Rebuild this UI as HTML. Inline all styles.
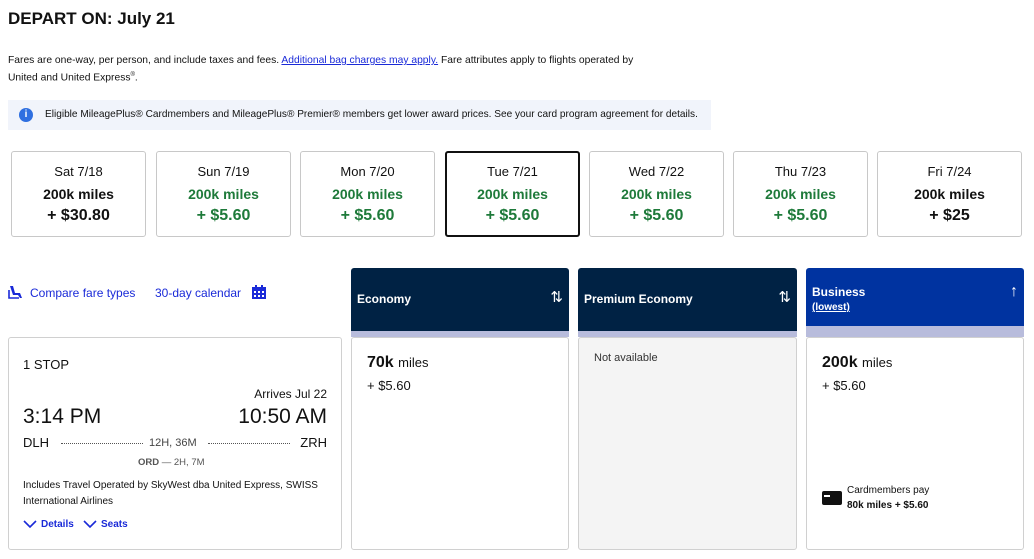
<!DOCTYPE html>
<html><head><style>
*{box-sizing:border-box;margin:0;padding:0}
body{width:1034px;height:559px;background:#fff;font-family:"Liberation Sans",sans-serif;color:#111;position:relative;overflow:hidden}
.a{position:absolute}
.card{position:absolute;top:151px;width:135px;height:86px;border:1px solid #c8c8c8;border-radius:3px;text-align:center}
.card .d{font-size:13px;margin-top:12px}
.card .m{font-size:14px;margin-top:7px;font-weight:bold}
.card .p{font-size:16px;margin-top:5px;font-weight:bold}
.g{color:#1e7a3a}
.hd{position:absolute;top:268px;height:69px;background:#002244;color:#fff;border-radius:3px 3px 0 0;font-size:12px;font-weight:bold;overflow:hidden}
.hd .band{position:absolute;left:0;right:0;bottom:0;height:6px;background:#b8bcdc}
.bx{position:absolute;top:337px;height:213px;border:1px solid #d0d0d0;border-radius:3px}
.blue{color:#1a2ad8}
</style></head><body>
<div class="a" style="left:8px;top:9px;font-size:17px;font-weight:bold">DEPART ON: July 21</div>
<div class="a" style="left:8px;top:53px;font-size:10.3px;line-height:15px;width:660px">Fares are one-way, per person, and include taxes and fees. <span class="blue" style="text-decoration:underline">Additional bag charges may apply.</span> Fare attributes apply to flights operated by<br>United and United Express<sup style="font-size:6px">®</sup>.</div>
<div class="a" style="left:8px;top:100px;width:703px;height:30px;background:#f1f4fb"></div>
<div class="a" style="left:19px;top:108px;width:14px;height:14px;border-radius:50%;background:#2f6fe0;color:#fff;font-size:10px;text-align:center;line-height:14px;font-weight:bold">i</div>
<div class="a" style="left:45px;top:109px;font-size:10.1px">Eligible MileagePlus® Cardmembers and MileagePlus® Premier® members get lower award prices. See your card program agreement for details.</div>

<div class="card" style="left:11px"><div class="d">Sat 7/18</div><div class="m">200k miles</div><div class="p">+ $30.80</div></div>
<div class="card" style="left:156px"><div class="d">Sun 7/19</div><div class="m g">200k miles</div><div class="p g">+ $5.60</div></div>
<div class="card" style="left:300px"><div class="d">Mon 7/20</div><div class="m g">200k miles</div><div class="p g">+ $5.60</div></div>
<div class="card" style="left:445px;border:2px solid #111"><div class="d" style="margin-top:11px">Tue 7/21</div><div class="m g">200k miles</div><div class="p g">+ $5.60</div></div>
<div class="card" style="left:589px"><div class="d">Wed 7/22</div><div class="m g">200k miles</div><div class="p g">+ $5.60</div></div>
<div class="card" style="left:733px"><div class="d">Thu 7/23</div><div class="m g">200k miles</div><div class="p g">+ $5.60</div></div>
<div class="card" style="left:877px;width:145px"><div class="d">Fri 7/24</div><div class="m">200k miles</div><div class="p">+ $25</div></div>

<svg class="a" style="left:8px;top:285px" width="16" height="15" viewBox="0 0 16 15"><path d="M2 1h3l2 7h5l2 5h-2l-2-3H5z" fill="#1a2ad8"/><path d="M1 5v8h10" stroke="#1a2ad8" stroke-width="1.6" fill="none"/></svg>
<div class="a blue" style="left:30px;top:286px;font-size:12px">Compare fare types</div>
<div class="a blue" style="left:155px;top:286px;font-size:12px">30-day calendar</div>
<svg class="a" style="left:252px;top:285px" width="14" height="14" viewBox="0 0 14 14"><rect x="0" y="2" width="14" height="12" fill="#1a2ad8"/><rect x="3" y="0" width="2" height="3" fill="#1a2ad8"/><rect x="9" y="0" width="2" height="3" fill="#1a2ad8"/><g fill="#fff"><rect x="2" y="6" width="2" height="2"/><rect x="6" y="6" width="2" height="2"/><rect x="10" y="6" width="2" height="2"/><rect x="2" y="10" width="2" height="2"/><rect x="6" y="10" width="2" height="2"/><rect x="10" y="10" width="2" height="2"/></g></svg>

<div class="hd" style="left:351px;width:218px"><div class="a" style="left:6px;top:24px">Economy</div><div class="a" style="right:6px;top:20px;font-size:15px;font-weight:normal">⇅</div><div class="band"></div></div>
<div class="hd" style="left:578px;width:219px"><div class="a" style="left:6px;top:24px">Premium Economy</div><div class="a" style="right:6px;top:20px;font-size:15px;font-weight:normal">⇅</div><div class="band"></div></div>
<div class="hd" style="left:806px;width:218px;background:#0033a0"><div class="a" style="left:6px;top:17px">Business</div><div class="a" style="left:6px;top:34px;font-size:10px;text-decoration:underline">(lowest)</div><div class="a" style="right:6px;top:15px;font-size:16px;font-weight:normal">↑</div><div class="band" style="height:11px"></div></div>

<div class="bx" style="left:8px;width:334px">
<div class="a" style="left:14px;top:19px;font-size:13px">1 STOP</div>
<div class="a" style="right:14px;top:49px;font-size:12px">Arrives Jul 22</div>
<div class="a" style="left:14px;top:67px;font-size:21px">3:14 PM</div>
<div class="a" style="right:14px;top:67px;font-size:21px">10:50 AM</div>
<div class="a" style="left:14px;top:97px;font-size:13px">DLH</div>
<div class="a" style="right:14px;top:97px;font-size:13px">ZRH</div>
<div class="a" style="left:52px;top:105px;width:82px;border-top:1px dotted #555"></div>
<div class="a" style="left:140px;top:99px;font-size:11px;color:#444">12H, 36M</div>
<div class="a" style="left:199px;top:105px;width:82px;border-top:1px dotted #555"></div>
<div class="a" style="left:129px;top:119px;font-size:9.5px;color:#555"><b>ORD</b> — 2H, 7M</div>
<div class="a" style="left:14px;top:140px;font-size:10px;line-height:16px;width:310px">Includes Travel Operated by SkyWest dba United Express, SWISS International Airlines</div>
<svg class="a" style="left:14px;top:182px" width="14" height="9" viewBox="0 0 14 9"><path d="M1 1l6 6 6-6" stroke="#1a2ad8" stroke-width="1.6" fill="none"/></svg>
<div class="a blue" style="left:32px;top:181px;font-size:10px;font-weight:bold">Details</div>
<svg class="a" style="left:74px;top:182px" width="14" height="9" viewBox="0 0 14 9"><path d="M1 1l6 6 6-6" stroke="#1a2ad8" stroke-width="1.6" fill="none"/></svg>
<div class="a blue" style="left:92px;top:181px;font-size:10px;font-weight:bold">Seats</div>
</div>
<div class="bx" style="left:351px;width:218px">
<div class="a" style="left:15px;top:16px;font-size:16px;font-weight:bold">70k <span style="font-size:13px;font-weight:normal">miles</span></div>
<div class="a" style="left:15px;top:40px;font-size:13px">+ $5.60</div></div>
<div class="bx" style="left:578px;width:219px;background:#f4f4f4"><div class="a" style="left:15px;top:14px;font-size:11px;color:#333">Not available</div></div>
<div class="bx" style="left:806px;width:218px">
<div class="a" style="left:15px;top:16px;font-size:16px;font-weight:bold">200k <span style="font-size:13px;font-weight:normal">miles</span></div>
<div class="a" style="left:15px;top:40px;font-size:13px">+ $5.60</div>
<div class="a" style="left:15px;top:153px;width:20px;height:14px;background:#111;border-radius:2px"><div style="margin-top:4px;height:2px;background:#fff;width:6px;margin-left:2px"></div></div>
<div class="a" style="left:40px;top:147px;font-size:10px">Cardmembers pay</div>
<div class="a" style="left:40px;top:162px;font-size:10px;font-weight:bold">80k miles + $5.60</div>
</div>
</body></html>
